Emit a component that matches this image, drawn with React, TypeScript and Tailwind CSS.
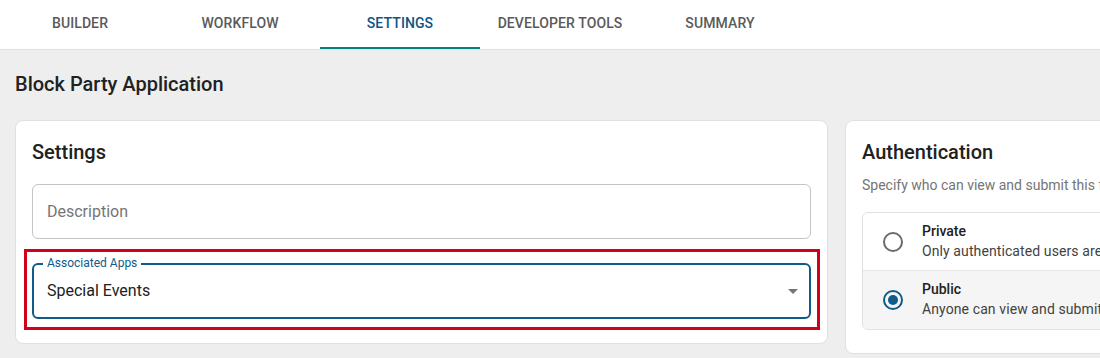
import { ReactNode } from "react"

const tabs = ["Builder", "Workflow", "Settings", "Developer Tools", "Summary"]

function DropArrow() {
  return (
    <svg viewBox="0 0 24 24" className="w-6 h-6 fill-[#757575]">
      <path d="M7 10l5 5 5-5z" />
    </svg>
  )
}

function Radio({ checked }: { checked?: boolean }) {
  return (
    <span
      className={
        checked
          ? "w-5 h-5 rounded-full border-2 border-[#0f5b8a] flex items-center justify-center shrink-0"
          : "w-5 h-5 rounded-full border-2 border-[#6b6b6b] shrink-0"
      }
    >
      {checked && <span className="w-[10px] h-[10px] rounded-full bg-[#0f5b8a]" />}
    </span>
  )
}

function Option({ title, text, checked }: { title: string; text: string; checked?: boolean }) {
  return (
    <div className={`flex items-center h-[58px] pl-[20px] gap-[19px] ${checked ? "bg-[#f5f5f5]" : "bg-white border-b border-[#e6e6e6]"}`}>
      <Radio checked={checked} />
      <div className="flex flex-col leading-[20px] whitespace-nowrap -mt-[2px]">
        <span className="text-[14px] font-medium text-[#212121]">{title}</span>
        <span className="text-[14px] text-[#424242] tracking-[0.1px]">{text}</span>
      </div>
    </div>
  )
}

function Card({ className, children }: { className: string; children: ReactNode }) {
  return (
    <div className={`bg-white border border-[#e0e0e0] rounded-[8px] shrink-0 ${className}`}>
      {children}
    </div>
  )
}

export default function App() {
  return (
    <div className="w-[1100px] h-[358px] overflow-hidden bg-[#eeeeee] font-['Roboto',sans-serif]">
      {/* Tabs */}
      <div className="flex bg-white border-b border-[#e0e0e0]">
        {tabs.map((t) => {
          const active = t === "Settings"
          return (
            <div
              key={t}
              className={`w-[160px] h-[49px] flex items-center justify-center pb-[1px] text-[14px] font-medium uppercase tracking-[0.1px] border-b-2 ${
                active ? "text-[#0d5684] border-[#00857a]" : "text-[#5a5a5a] border-transparent"
              }`}
            >
              {t}
            </div>
          )
        })}
      </div>

      <div className="px-[15px] pt-[20px]">
        <h1 className="text-[20px] leading-[28px] font-medium text-[#212121]">Block Party Application</h1>

        <div className="flex items-start gap-[17px] mt-[22px]">
          {/* Settings card */}
          <Card className="w-[813px] px-[16px] pt-[17px] pb-[13px]">
            <h2 className="text-[20px] leading-[28px] font-medium text-[#212121]">Settings</h2>
            <div className="mt-[18px] h-[55px] border border-[#c4c4c4] rounded-[6px] flex items-center pl-[14px] text-[16px] text-[#757575]">
              Description
            </div>

            <div className="mt-[10px] -ml-[8px] -mr-[9px] border-[3px] border-[#d0021b] pl-[5px] pr-[6px] pt-[11px] pb-[8px]">
              <div className="relative h-[56px] border-2 border-[#0f5b8a] rounded-[6px] flex items-center justify-between pl-[13px] pr-[4px]">
                <span className="absolute -top-[10px] left-[9px] px-[4px] bg-white text-[12px] leading-[16px] text-[#0f5b8a]">
                  Associated Apps
                </span>
                <span className="text-[16px] text-[#212121]">Special Events</span>
                <DropArrow />
              </div>
            </div>
          </Card>

          {/* Authentication card */}
          <Card className="w-[420px] px-[16px] pt-[17px] pb-[23px]">
            <h2 className="text-[20px] leading-[28px] font-medium text-[#212121]">Authentication</h2>
            <p className="mt-[9px] text-[14px] leading-[20px] text-[#757575] whitespace-nowrap">
              Specify who can view and submit this form.
            </p>
            <div className="mt-[17px] border border-[#e0e0e0] rounded-[6px] overflow-hidden">
              <Option title="Private" text="Only authenticated users are able to view and submit." />
              <Option title="Public" text="Anyone can view and submit this form." checked />
            </div>
          </Card>
        </div>
      </div>
    </div>
  )
}
